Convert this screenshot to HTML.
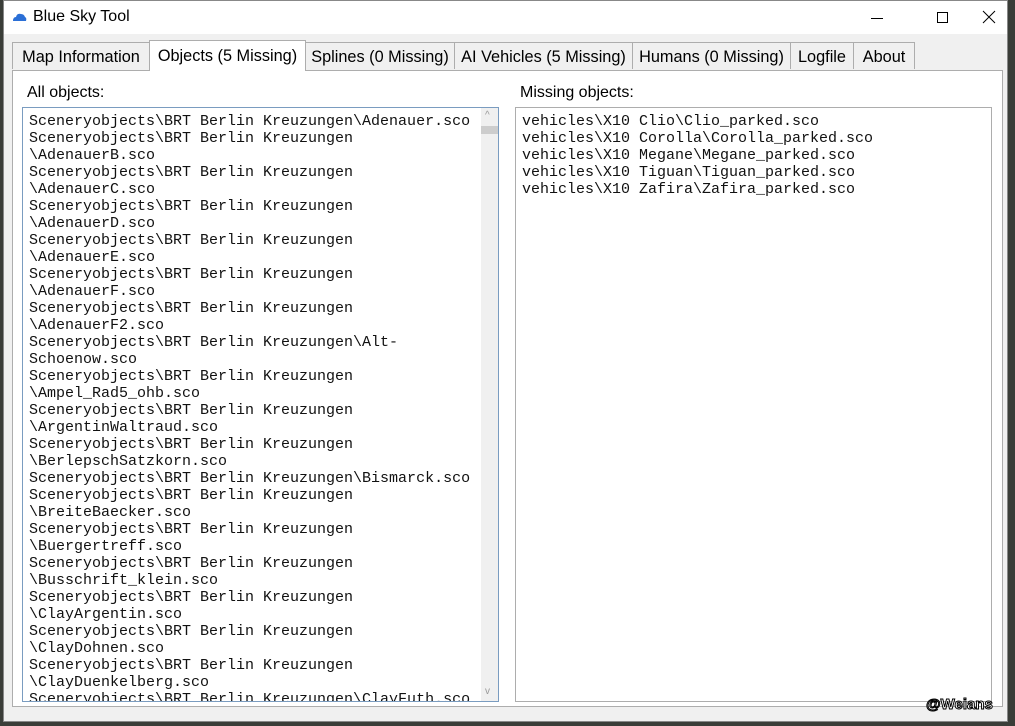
<!DOCTYPE html>
<html><head><meta charset="utf-8"><style>
body{margin:0;width:1015px;height:726px;background:#3a3d38;position:relative;overflow:hidden;font-family:"Liberation Sans",sans-serif}
.win{position:absolute;left:3px;top:0;width:1003px;height:720px;background:#f0f0f0;border:1px solid #888}
.title{position:absolute;left:0;top:0;width:1003px;height:33px;background:#fff}
.title span{position:absolute;left:29px;top:7px;font-size:16px;color:#000}
.tab{position:absolute;top:42px;height:27px;border:1px solid #adadad;border-bottom:none;background:#f0f0f0;font-size:16.3px;line-height:28px;text-align:center;box-sizing:border-box;color:#000}
.tab.sel{top:40px;height:31px;background:#fff;z-index:2;line-height:31px}
.panel{position:absolute;left:12px;top:70px;width:991px;height:637px;background:#fff;border:1px solid #adadad;box-sizing:border-box}
.lbl{position:absolute;font-size:16px;top:84px}
.list{position:absolute;top:107px;height:595px;background:#fff;box-sizing:border-box;overflow:hidden;font-family:"Liberation Mono",monospace;font-size:15px;line-height:17px;padding:5px 0 0 6px;white-space:pre;color:#111}
</style></head><body>
<div class="win">
<div class="title">
<svg style="position:absolute;left:8px;top:12px" width="15" height="9" viewBox="0 0 15 9"><path d="M1 8 Q1 4 4 4 Q5 0 9 1 Q12 1 13 4 Q15 5 14 8Z" fill="#2b6fd6"/></svg>
<span>Blue Sky Tool</span>
<svg style="position:absolute;left:866px;top:10px" width="14" height="14"><path d="M1 7.5H13" stroke="#000"/></svg>
<svg style="position:absolute;left:932px;top:10px" width="14" height="14"><rect x="1.5" y="1.5" width="10" height="10" fill="none" stroke="#000"/></svg>
<svg style="position:absolute;left:978px;top:9px" width="14" height="14"><path d="M1 1L13 13M13 1L1 13" stroke="#000"/></svg>
</div>
</div>
<div class="panel"></div>
<div class="tab" style="left:12px;width:138px">Map Information</div>
<div class="tab sel" style="left:149px;width:157px">Objects (5 Missing)</div>
<div class="tab" style="left:305px;width:150px">Splines (0 Missing)</div>
<div class="tab" style="left:454px;width:179px">AI Vehicles (5 Missing)</div>
<div class="tab" style="left:632px;width:159px">Humans (0 Missing)</div>
<div class="tab" style="left:790px;width:64px">Logfile</div>
<div class="tab" style="left:853px;width:62px">About</div>
<div class="lbl" style="left:27px">All objects:</div>
<div class="lbl" style="left:520px">Missing objects:</div>
<div class="list" style="left:22px;width:477px;border:1px solid #7a9cc0">Sceneryobjects\BRT Berlin Kreuzungen\Adenauer.sco
Sceneryobjects\BRT Berlin Kreuzungen
\AdenauerB.sco
Sceneryobjects\BRT Berlin Kreuzungen
\AdenauerC.sco
Sceneryobjects\BRT Berlin Kreuzungen
\AdenauerD.sco
Sceneryobjects\BRT Berlin Kreuzungen
\AdenauerE.sco
Sceneryobjects\BRT Berlin Kreuzungen
\AdenauerF.sco
Sceneryobjects\BRT Berlin Kreuzungen
\AdenauerF2.sco
Sceneryobjects\BRT Berlin Kreuzungen\Alt-
Schoenow.sco
Sceneryobjects\BRT Berlin Kreuzungen
\Ampel_Rad5_ohb.sco
Sceneryobjects\BRT Berlin Kreuzungen
\ArgentinWaltraud.sco
Sceneryobjects\BRT Berlin Kreuzungen
\BerlepschSatzkorn.sco
Sceneryobjects\BRT Berlin Kreuzungen\Bismarck.sco
Sceneryobjects\BRT Berlin Kreuzungen
\BreiteBaecker.sco
Sceneryobjects\BRT Berlin Kreuzungen
\Buergertreff.sco
Sceneryobjects\BRT Berlin Kreuzungen
\Busschrift_klein.sco
Sceneryobjects\BRT Berlin Kreuzungen
\ClayArgentin.sco
Sceneryobjects\BRT Berlin Kreuzungen
\ClayDohnen.sco
Sceneryobjects\BRT Berlin Kreuzungen
\ClayDuenkelberg.sco
Sceneryobjects\BRT Berlin Kreuzungen\ClayFuth.sco</div>
<div style="position:absolute;left:481px;top:108px;width:17px;height:593px;background:#f0f0f0"></div>
<div style="position:absolute;left:481px;top:126px;width:17px;height:8px;background:#cdcdcd"></div>
<div style="position:absolute;left:485px;top:110px;font-size:10px;color:#999">^</div>
<div style="position:absolute;left:485px;top:686px;font-size:10px;color:#999">v</div>
<div class="list" style="left:515px;width:477px;border:1px solid #adadad">vehicles\X10 Clio\Clio_parked.sco
vehicles\X10 Corolla\Corolla_parked.sco
vehicles\X10 Megane\Megane_parked.sco
vehicles\X10 Tiguan\Tiguan_parked.sco
vehicles\X10 Zafira\Zafira_parked.sco</div>
<div style="position:absolute;left:926px;top:696px;font-size:15px;font-weight:bold;color:#fff;-webkit-text-stroke:1px #000;letter-spacing:0">@Weians</div>
</body></html>
